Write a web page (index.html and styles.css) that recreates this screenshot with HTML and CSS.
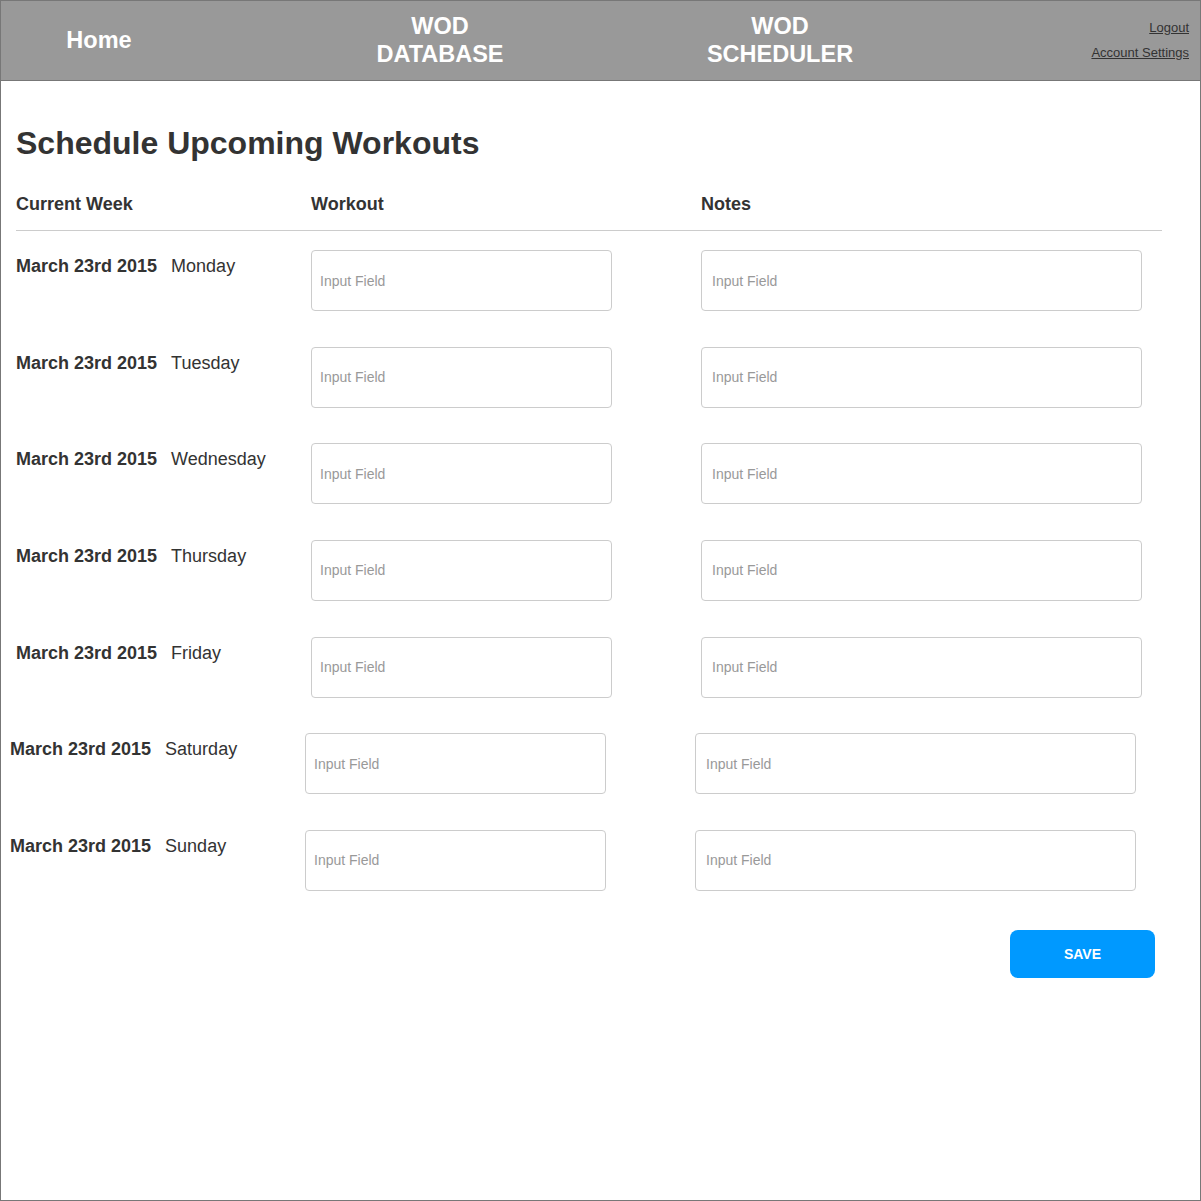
FILE: index.html
```html
<!DOCTYPE html>
<html>
<head>
<meta charset="utf-8">
<link rel="stylesheet" href="styles.css">
</head>
<body>
<div class="frame">
  <header class="topbar">
    <a class="nav nav-home">Home</a>
    <a class="nav nav-db">WOD<br>DATABASE</a>
    <a class="nav nav-sched">WOD<br>SCHEDULER</a>
    <div class="account">
      <a class="acct-link">Logout</a>
      <a class="acct-link">Account Settings</a>
    </div>
  </header>
  <main class="content">
    <h1 class="title">Schedule Upcoming Workouts</h1>
    <div class="colheads">
      <div class="col-label">Current Week</div>
      <div class="col-workout">Workout</div>
      <div class="col-notes">Notes</div>
    </div>
    <div class="rows">
      <div class="row">
        <div class="label"><span class="date">March 23rd 2015</span><span class="day">Monday</span></div>
        <input class="field field-workout" placeholder="Input Field">
        <input class="field field-notes" placeholder="Input Field">
      </div>
      <div class="row">
        <div class="label"><span class="date">March 23rd 2015</span><span class="day">Tuesday</span></div>
        <input class="field field-workout" placeholder="Input Field">
        <input class="field field-notes" placeholder="Input Field">
      </div>
      <div class="row">
        <div class="label"><span class="date">March 23rd 2015</span><span class="day">Wednesday</span></div>
        <input class="field field-workout" placeholder="Input Field">
        <input class="field field-notes" placeholder="Input Field">
      </div>
      <div class="row">
        <div class="label"><span class="date">March 23rd 2015</span><span class="day">Thursday</span></div>
        <input class="field field-workout" placeholder="Input Field">
        <input class="field field-notes" placeholder="Input Field">
      </div>
      <div class="row">
        <div class="label"><span class="date">March 23rd 2015</span><span class="day">Friday</span></div>
        <input class="field field-workout" placeholder="Input Field">
        <input class="field field-notes" placeholder="Input Field">
      </div>
      <div class="row row-shift">
        <div class="label"><span class="date">March 23rd 2015</span><span class="day">Saturday</span></div>
        <input class="field field-workout" placeholder="Input Field">
        <input class="field field-notes" placeholder="Input Field">
      </div>
      <div class="row row-shift">
        <div class="label"><span class="date">March 23rd 2015</span><span class="day">Sunday</span></div>
        <input class="field field-workout" placeholder="Input Field">
        <input class="field field-notes" placeholder="Input Field">
      </div>
    </div>
    <div class="actions">
      <button class="save">SAVE</button>
    </div>
  </main>
</div>
</body>
</html>
```

FILE: styles.css
```css
* { box-sizing: border-box; }
html, body { margin: 0; padding: 0; background: #fff; }
body { font-family: "Liberation Sans", Arial, sans-serif; color: #333; }

.frame {
  width: 1201px;
  height: 1201px;
  border: 1px solid #777;
  overflow: hidden;
}

.topbar {
  height: 80px;
  background: #999999;
  border-bottom: 1px solid #777;
  display: flex;
  align-items: center;
  padding-right: 11px;
  padding-bottom: 2px;
}
.nav {
  color: #fff;
  font-weight: bold;
  font-size: 23.5px;
  line-height: 28px;
  text-align: center;
  width: 200px;
  flex: none;
}
.nav-home { width: 196px; }
.nav-db { margin-left: 143px; }
.nav-sched { margin-left: 140px; }
.account {
  margin-left: auto;
  display: flex;
  flex-direction: column;
  align-items: flex-end;
  gap: 10px;
}
.acct-link {
  font-size: 13px;
  line-height: 15px;
  color: #333;
  text-decoration: underline;
}

.content {
  padding-left: 15px;
  width: 1161px;
}
.title {
  margin: 44px 0 0 0;
  font-size: 32px;
  line-height: 37px;
  font-weight: bold;
  color: #333;
}
.colheads {
  margin-top: 32px;
  display: flex;
  font-size: 18px;
  line-height: 21px;
  font-weight: bold;
  padding-bottom: 15px;
  border-bottom: 1px solid #ccc;
  width: 1146px;
}
.col-label { width: 295px; }
.col-workout { width: 390px; }

.rows {
  margin-top: 19px;
  display: flex;
  flex-direction: column;
  gap: 35.6667px;
}
.row {
  display: flex;
  align-items: flex-start;
  height: 61px;
}
.row-shift { margin-left: -6px; }
.label {
  width: 295px;
  padding-top: 6px;
  display: flex;
  align-items: baseline;
  line-height: 20px;
  font-size: 18px;
}
.date {
  font-weight: bold;
}
.day {
  margin-left: 14px;
}
.field {
  height: 61px;
  border: 1px solid #ccc;
  border-radius: 4px;
  padding: 0 8px;
  font-family: "Liberation Sans", Arial, sans-serif;
  font-size: 14px;
  color: #333;
  background: #fff;
  outline: none;
}
.field::placeholder { color: #999; }
.field-workout { width: 301px; }
.field-notes { width: 441px; margin-left: 89px; padding-left: 10px; }

.actions {
  margin-top: 39px;
  width: 1139px;
  display: flex;
  justify-content: flex-end;
}
.save {
  width: 145px;
  height: 48px;
  border: none;
  border-radius: 8px;
  background: #0099ff;
  color: #fff;
  font-family: "Liberation Sans", Arial, sans-serif;
  font-weight: bold;
  font-size: 14px;
  padding: 0;
}
```
